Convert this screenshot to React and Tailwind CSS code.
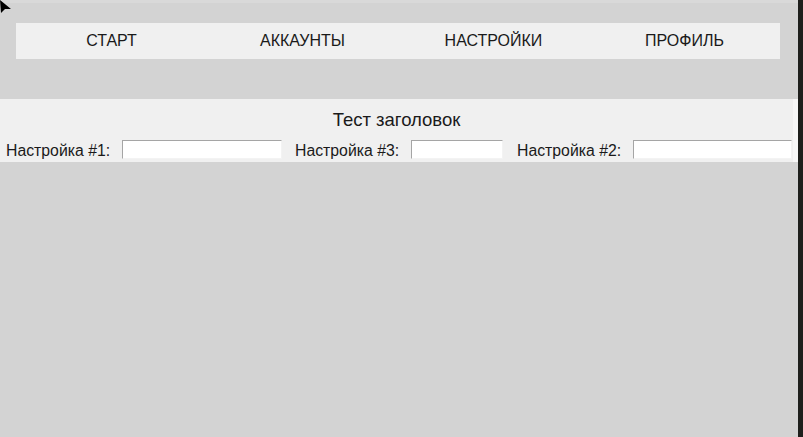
export default function App() {
  const tabs = ["СТАРТ", "АККАУНТЫ", "НАСТРОЙКИ", "ПРОФИЛЬ"];
  const inputCls =
    "h-[19px] bg-white border-t border-l border-[#a5a5a5] border-r border-b border-r-[#f3f3f3] border-b-[#f3f3f3] outline-none";

  return (
    <div
      className="relative flex w-[803px] h-[437px] overflow-hidden text-[#1a1a1a]"
      style={{ fontFamily: '"Liberation Sans", Arial, sans-serif' }}
    >
      <div className="flex flex-col w-[798px] bg-[#d3d3d3]">
        <div className="h-[3px] bg-[#d9d9d9]" />
        <nav className="grid grid-cols-4 w-[764px] h-[36px] ml-[16px] mt-[20px] bg-[#f0f0f0] text-[16px]">
          {tabs.map((t) => (
            <div key={t} className="flex items-center justify-center">
              {t}
            </div>
          ))}
        </nav>

        <section className="mt-[40px] h-[63px] bg-[#f0f0f0] border-r-[5px] border-[#f7f7f7]">
          <h1 className="h-[41px] flex items-center justify-center text-[18.5px] pt-[1px]">
            Тест заголовок
          </h1>
          <div className="flex items-start h-[22px] pl-[6px] text-[15.8px]">
            <label className="w-[116px] leading-[19px] pt-[1px]">Настройка #1:</label>
            <input className={`w-[160px] ${inputCls}`} />
            <label className="ml-[13px] w-[116px] leading-[19px] pt-[1px]">Настройка #3:</label>
            <input className={`w-[92px] ${inputCls}`} />
            <label className="ml-[14px] w-[116px] leading-[19px] pt-[1px]">Настройка #2:</label>
            <input className={`w-[159px] ${inputCls}`} />
          </div>
        </section>
      </div>
      <div className="w-[5px] bg-[#1e1f1c]" />

      <svg className="absolute left-0 top-0" width="12" height="14" viewBox="0 0 12 14">
        <polygon points="0,0 11,9 5,9 1,13" fill="#000" />
      </svg>
    </div>
  );
}
